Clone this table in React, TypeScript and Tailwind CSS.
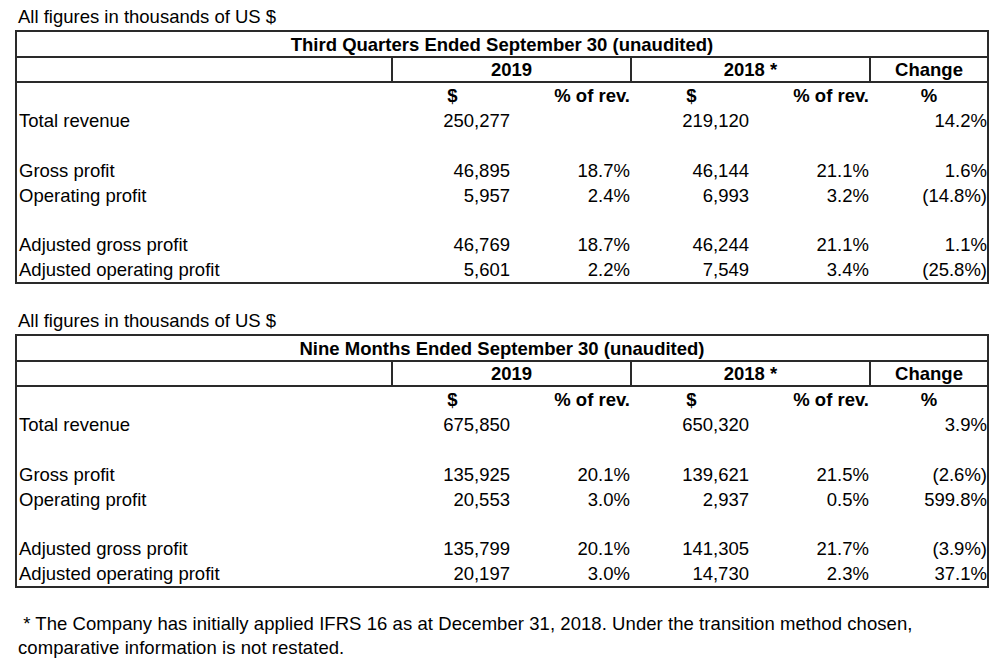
import React from "react";

type Row = [string, string, string, string, string, string] | null;

const quarterRows: Row[] = [
  ["Total revenue", "250,277", "", "219,120", "", "14.2%"],
  null,
  ["Gross profit", "46,895", "18.7%", "46,144", "21.1%", "1.6%"],
  ["Operating profit", "5,957", "2.4%", "6,993", "3.2%", "(14.8%)"],
  null,
  ["Adjusted gross profit", "46,769", "18.7%", "46,244", "21.1%", "1.1%"],
  ["Adjusted operating profit", "5,601", "2.2%", "7,549", "3.4%", "(25.8%)"],
];

const nineMonthRows: Row[] = [
  ["Total revenue", "675,850", "", "650,320", "", "3.9%"],
  null,
  ["Gross profit", "135,925", "20.1%", "139,621", "21.5%", "(2.6%)"],
  ["Operating profit", "20,553", "3.0%", "2,937", "0.5%", "599.8%"],
  null,
  ["Adjusted gross profit", "135,799", "20.1%", "141,305", "21.7%", "(3.9%)"],
  ["Adjusted operating profit", "20,197", "3.0%", "14,730", "2.3%", "37.1%"],
];

const ResultsTable = ({ title, rows }: { title: string; rows: Row[] }) => {
  return (
    <div className="w-[974px] border-2 border-[#2a2a2a] grid grid-cols-[376px_119px_120px_119px_120px_116px]">
      {/* title row */}
      <div className="col-span-6 h-[26px] border-b-2 border-[#2a2a2a] flex items-center justify-center font-bold">
        {title}
      </div>

      {/* year header row */}
      <div className="h-[25px] border-b-2 border-r-2 border-[#2a2a2a]" />
      <div className="col-span-2 h-[25px] border-b-2 border-r-2 border-[#2a2a2a] flex items-center justify-center font-bold">
        2019
      </div>
      <div className="col-span-2 h-[25px] border-b-2 border-r-2 border-[#2a2a2a] flex items-center justify-center font-bold">
        2018 *
      </div>
      <div className="h-[25px] border-b-2 border-[#2a2a2a] flex items-center justify-center font-bold">
        Change
      </div>

      {/* unit row */}
      <div className="h-[24.9px]" />
      <div className="h-[24.9px] flex items-center justify-center font-bold">$</div>
      <div className="h-[24.9px] flex items-center justify-end pr-[2px] font-bold">% of rev.</div>
      <div className="h-[24.9px] flex items-center justify-center font-bold">$</div>
      <div className="h-[24.9px] flex items-center justify-end pr-[2px] font-bold">% of rev.</div>
      <div className="h-[24.9px] flex items-center justify-center font-bold">%</div>

      {rows.map((row, i) =>
        row === null ? (
          <div key={i} className="col-span-6 h-[24.9px]" />
        ) : (
          <React.Fragment key={i}>
            <div className="h-[24.9px] flex items-center pl-[2px]">{row[0]}</div>
            <div className="h-[24.9px] flex items-center justify-end pr-[2px]">{row[1]}</div>
            <div className="h-[24.9px] flex items-center justify-end pr-[2px]">{row[2]}</div>
            <div className="h-[24.9px] flex items-center justify-end pr-[2px]">{row[3]}</div>
            <div className="h-[24.9px] flex items-center justify-end pr-[2px]">{row[4]}</div>
            <div className="h-[24.9px] flex items-center justify-end">{row[5]}</div>
          </React.Fragment>
        )
      )}
    </div>
  );
};

export default function App() {
  return (
    <div className="w-[1000px] h-[660px] bg-white text-black pl-[15px] pt-[4px] font-['Liberation_Sans',Arial,sans-serif] text-[18.5px] leading-[25px]">
      <div className="h-[25px] pl-[3px] mb-[1px]">All figures in thousands of US $</div>
      <ResultsTable title="Third Quarters Ended September 30 (unaudited)" rows={quarterRows} />

      <div className="h-[25px] pl-[3px] mt-[24px] mb-[1px]">All figures in thousands of US $</div>
      <ResultsTable title="Nine Months Ended September 30 (unaudited)" rows={nineMonthRows} />

      <p className="mt-[24px] pl-[3px] leading-[24px] whitespace-pre tracking-[0.06px]">
        {" * The Company has initially applied IFRS 16 as at December 31, 2018. Under the transition method chosen,"}
        <br />
        comparative information is not restated.
      </p>
    </div>
  );
}
